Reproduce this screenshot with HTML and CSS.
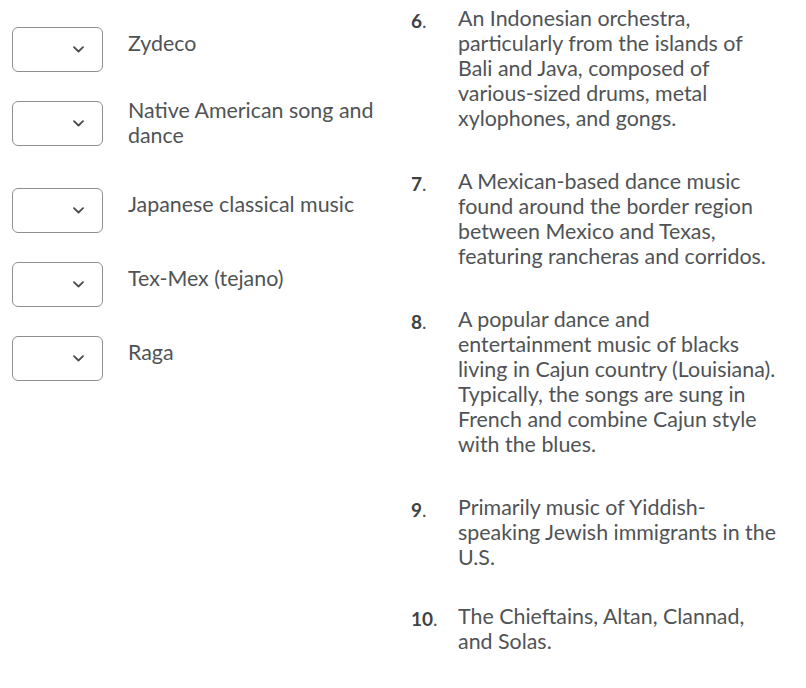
FILE: index.html
```html
<!DOCTYPE html>
<html lang="en">
<head>
<meta charset="utf-8">
<title>Matching</title>
<link rel="stylesheet" href="styles.css">
</head>
<body>
<div class="page">
  <div class="choices">
    <div class="row">
      <div class="select"><svg class="chev" width="11" height="7" viewBox="0 0 11 7"><path d="M1 1.2 L5.5 5.5 L10 1.2" fill="none" stroke="#494c4e" stroke-width="1.8" stroke-linecap="round" stroke-linejoin="round"/></svg></div>
      <div class="label">Zydeco</div>
    </div>
    <div class="row row-two">
      <div class="select"><svg class="chev" width="11" height="7" viewBox="0 0 11 7"><path d="M1 1.2 L5.5 5.5 L10 1.2" fill="none" stroke="#494c4e" stroke-width="1.8" stroke-linecap="round" stroke-linejoin="round"/></svg></div>
      <div class="label">Native American song and dance</div>
    </div>
    <div class="row">
      <div class="select"><svg class="chev" width="11" height="7" viewBox="0 0 11 7"><path d="M1 1.2 L5.5 5.5 L10 1.2" fill="none" stroke="#494c4e" stroke-width="1.8" stroke-linecap="round" stroke-linejoin="round"/></svg></div>
      <div class="label">Japanese classical music</div>
    </div>
    <div class="row">
      <div class="select"><svg class="chev" width="11" height="7" viewBox="0 0 11 7"><path d="M1 1.2 L5.5 5.5 L10 1.2" fill="none" stroke="#494c4e" stroke-width="1.8" stroke-linecap="round" stroke-linejoin="round"/></svg></div>
      <div class="label">Tex-Mex (tejano)</div>
    </div>
    <div class="row">
      <div class="select"><svg class="chev" width="11" height="7" viewBox="0 0 11 7"><path d="M1 1.2 L5.5 5.5 L10 1.2" fill="none" stroke="#494c4e" stroke-width="1.8" stroke-linecap="round" stroke-linejoin="round"/></svg></div>
      <div class="label">Raga</div>
    </div>
  </div>
  <ol class="answers">
    <li class="item"><span class="num"><b>6</b>.</span><span class="desc">An Indonesian orchestra, particularly from the islands of Bali and Java, composed of various-sized drums, metal xylophones, and gongs.</span></li>
    <li class="item"><span class="num"><b>7</b>.</span><span class="desc">A Mexican-based dance music found around the border region between Mexico and Texas, featuring rancheras and corridos.</span></li>
    <li class="item"><span class="num"><b>8</b>.</span><span class="desc">A popular dance and entertainment music of blacks living in Cajun country (Louisiana). Typically, the songs are sung in French and combine Cajun style with the blues.</span></li>
    <li class="item"><span class="num"><b>9</b>.</span><span class="desc">Primarily music of Yiddish-speaking Jewish immigrants in the U.S.</span></li>
    <li class="item item-last"><span class="num"><b>10</b>.</span><span class="desc">The Chieftains, Altan, Clannad, and Solas.</span></li>
  </ol>
</div>
</body>
</html>
```

FILE: styles.css
```css
html, body {
  margin: 0;
  padding: 0;
  background: #ffffff;
}

body {
  font-family: Lato, "Open Sans", "Liberation Sans", sans-serif;
  font-size: 21.4px;
  line-height: 25px;
  color: #505356;
}

.page {
  display: flex;
  align-items: flex-start;
  padding-left: 12px;
}

.choices {
  width: 386px;
  padding-top: 27px;
  display: flex;
  flex-direction: column;
  gap: 29px;
}

.row {
  display: flex;
  align-items: flex-start;
  gap: 25px;
}

.row-two {
  margin-bottom: 11px;
}

.select {
  flex: none;
  width: 91px;
  height: 45px;
  border: 1px solid #8d9194;
  border-radius: 6px;
  display: flex;
  align-items: center;
  justify-content: flex-end;
  padding-right: 18px;
  box-sizing: border-box;
}

.chev {
  display: block;
}

.label {
  width: 262px;
  padding-top: 4px;
}

.row-two .label {
  padding-top: 0;
  margin-top: -3px;
}

.answers {
  list-style: none;
  margin: 0;
  padding: 6px 0 0 13px;
  width: 367px;
  display: flex;
  flex-direction: column;
  gap: 38px;
}

.item {
  display: flex;
  align-items: flex-start;
}

.item-last {
  margin-top: -4px;
}

.num {
  flex: none;
  width: 47px;
  font-size: 19px;
  position: relative;
  top: 2px;
}

.num b {
  font-weight: 700;
  color: #3f4244;
}

.desc {
  width: 322px;
}
```
